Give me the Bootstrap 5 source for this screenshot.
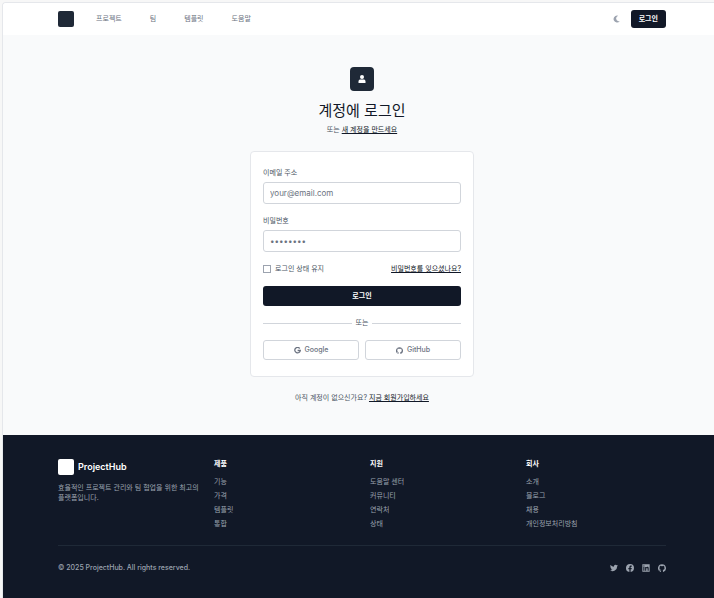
<!DOCTYPE html>
<html lang="ko">
<head>
<meta charset="utf-8">
<meta name="viewport" content="width=device-width, initial-scale=1">
<title>ProjectHub</title>
<link href="https://cdn.jsdelivr.net/npm/bootstrap@5.3.0/dist/css/bootstrap.min.css" rel="stylesheet">
<style>
body{background:#f7f7f7;font-family:Inter,"Noto Sans CJK KR",sans-serif;font-size:7px;line-height:10px;color:#4b5563}
svg{display:block;fill:currentColor}
a{color:inherit}
.page-frame{margin:2px 0 0 2px;border:solid #e5e7eb;border-width:1px 0 0 1px;border-radius:4px 0 0 0;background:#f9fafb;min-height:calc(100vh - 2px);overflow:hidden}
.page-inner{padding-left:55px;padding-right:48px}
.top-bar{height:32px;color:#6b7280}
.logo-box{width:16px;height:16px;border-radius:2px;background:#1f2937}
.menu-links{gap:28px;margin-left:22px}
.moon-btn{color:#9ca3af;margin-right:11px}
.moon-btn:hover{color:#6b7280}
.btn-ink{background:#111827;color:#fff;font-size:7px;line-height:10px;font-weight:700;border:0;border-radius:3px;padding:4px 8px}
.btn-ink:hover{background:#1f2937;color:#fff}
.btn-wide{padding:5px 8px;margin-top:12px}
.login-area{padding-top:32px;padding-bottom:32px}
.login-column{width:224px}
.user-badge{width:24px;height:24px;border-radius:4px;background:#1f2937}
.login-title{font-size:15px;line-height:20px;font-weight:400;color:#111827;margin:10px 0 4px}
.ink-link{color:#111827;text-decoration:underline}
.panel{border:1px solid #e5e7eb;border-radius:4px;background:#fff;padding:16px 12px;margin-top:16px}
.field-label{margin-bottom:4px;display:block}
.field-input{font-size:8px;line-height:12px;padding:4px 6px;border:1px solid #d1d5db;border-radius:3px;color:#374151}
.field-input::placeholder{color:#6b7280}
.tick{appearance:none;width:8px;height:8px;border:1px solid #9ca3af;background:#fff;margin:0 4px 0 0}
.tick:checked{background:#111827}
.rule{height:1px;background:#d1d5db}
.social-row{gap:6px}
.btn-line{border:1px solid #d1d5db;border-radius:3px;background:#fff;color:#6b7280;font-size:7px;line-height:10px;font-weight:500;padding:4px}
.site-footer{background:#111827;color:#9ca3af;padding-top:24px;padding-bottom:24px}
.brand-name{font-size:9px;line-height:16px;font-weight:600;color:#fff}
.brand-text{margin-right:-4px}
.footer-grid{display:grid;grid-template-columns:repeat(4,1fr);column-gap:16px}
.footer-title{font-size:7px;line-height:10px;font-weight:700;color:#fff;margin-bottom:8px}
.footer-links{gap:4px}
.footer-end{border-top:1px solid #1f2937;margin-top:16px;padding-top:17px}
</style>
<script src="https://cdn.jsdelivr.net/npm/bootstrap@5.3.0/dist/js/bootstrap.bundle.min.js"></script>
</head>
<body>
<svg class="d-none" aria-hidden="true">
<symbol id="github" viewBox="0 0 24 24"><path d="M12 .5a12 12 0 0 0-3.800 23.400c.6.1.8-.3.8-.6v-2.200c-3.300.7-4-1.400-4-1.400-.6-1.400-1.300-1.800-1.300-1.800-1.100-.7.1-.7.1-.7 1.200.1 1.800 1.200 1.800 1.200 1.100 1.800 2.800 1.300 3.500 1 .1-.8.4-1.300.8-1.600-2.700-.3-5.500-1.300-5.500-5.900 0-1.300.5-2.400 1.200-3.200-.1-.3-.5-1.500.1-3.200 0 0 1-.3 3.300 1.200a11.500 11.500 0 0 1 6 0c2.300-1.500 3.300-1.200 3.300-1.200.7 1.700.2 2.900.1 3.200.8.8 1.200 1.900 1.200 3.200 0 4.600-2.800 5.600-5.500 5.900.4.400.8 1.100.8 2.200v3.300c0 .3.2.7.8.6A12 12 0 0 0 12 .5z"/></symbol>
</svg>
<div class="page-frame d-flex flex-column">
<header class="bg-white">
<nav class="page-inner top-bar d-flex align-items-center" aria-label="주 메뉴">
<a href="#" class="logo-box" aria-label="ProjectHub"></a>
<div class="menu-links d-flex flex-grow-1">
<a href="#" class="text-decoration-none">프로젝트</a><a href="#" class="text-decoration-none">팀</a><a href="#" class="text-decoration-none">템플릿</a><a href="#" class="text-decoration-none">도움말</a>
</div>
<button type="button" class="moon-btn btn p-0 border-0" aria-label="다크 모드"><svg width="7" height="8" viewBox="0 0 14 16"><path d="M8 1a7 7 0 1 0 5.500 11.500c-1 .3-2 .2-3 0A5.600 5.600 0 0 1 9.500 2c.3-.2.500-.4.500-.700A7 7 0 0 0 8 1z"/></svg></button>
<button type="button" class="btn btn-ink">로그인</button>
</nav>
</header>
<main class="page-inner login-area">
<div class="login-column mx-auto text-center">
<div class="user-badge mx-auto d-flex align-items-center justify-content-center text-white"><svg width="8" height="8" viewBox="0 0 16 16"><circle cx="8" cy="4" r="4"/><path d="M1 16v-3c0-3 2-4 4-4h6c2 0 4 1 4 4v3z"/></svg></div>
<h1 class="login-title">계정에 로그인</h1>
<p class="m-0">또는 <a href="#" class="ink-link">새 계정을 만드세요</a></p>
<form class="panel text-start">
<label for="email" class="field-label">이메일 주소</label>
<input type="email" id="email" class="form-control field-input" placeholder="your@email.com">
<label for="password" class="field-label mt-2 pt-1">비밀번호</label>
<input type="password" id="password" class="form-control field-input" placeholder="••••••••">
<div class="d-flex justify-content-between align-items-center mt-2 pt-1">
<label for="remember" class="d-flex align-items-center"><input type="checkbox" id="remember" class="tick">로그인 상태 유지</label>
<a href="#" class="ink-link">비밀번호를 잊으셨나요?</a>
</div>
<button type="submit" class="btn btn-ink btn-wide w-100 d-block">로그인</button>
<div class="d-flex align-items-center gap-1 my-2 py-1"><span class="rule flex-fill"></span><span>또는</span><span class="rule flex-fill"></span></div>
<div class="social-row d-flex">
<button type="button" class="btn btn-line col d-flex align-items-center justify-content-center gap-1"><svg width="7" height="7" viewBox="0 0 14 14"><path fill="none" stroke="currentColor" stroke-width="2.600" d="M11.500 3A5.500 5.500 0 1 0 12.600 7H7.200"/></svg>Google</button>
<button type="button" class="btn btn-line col d-flex align-items-center justify-content-center gap-1"><svg width="7" height="7"><use href="#github"/></svg>GitHub</button>
</div>
</form>
<p class="mb-0 mt-3">아직 계정이 없으신가요? <a href="#" class="ink-link">지금 회원가입하세요</a></p>
</div>
</main>
<footer class="page-inner site-footer flex-grow-1">
<div class="footer-grid">
<div>
<div class="d-flex align-items-center gap-1 mb-2"><span class="logo-box bg-white"></span><span class="brand-name">ProjectHub</span></div>
<p class="brand-text mb-0">효율적인 프로젝트 관리와 팀 협업을 위한 최고의 플랫폼입니다.</p>
</div>
<div><h2 class="footer-title">제품</h2><div class="footer-links d-flex flex-column align-items-start"><a href="#" class="text-decoration-none">기능</a><a href="#" class="text-decoration-none">가격</a><a href="#" class="text-decoration-none">템플릿</a><a href="#" class="text-decoration-none">통합</a></div></div>
<div><h2 class="footer-title">지원</h2><div class="footer-links d-flex flex-column align-items-start"><a href="#" class="text-decoration-none">도움말 센터</a><a href="#" class="text-decoration-none">커뮤니티</a><a href="#" class="text-decoration-none">연락처</a><a href="#" class="text-decoration-none">상태</a></div></div>
<div><h2 class="footer-title">회사</h2><div class="footer-links d-flex flex-column align-items-start"><a href="#" class="text-decoration-none">소개</a><a href="#" class="text-decoration-none">블로그</a><a href="#" class="text-decoration-none">채용</a><a href="#" class="text-decoration-none">개인정보처리방침</a></div></div>
</div>
<div class="footer-end d-flex justify-content-between align-items-center">
<span class="fw-medium">© 2025 ProjectHub. All rights reserved.</span>
<div class="d-flex gap-2">
<a href="#" aria-label="Twitter"><svg width="8" height="8" viewBox="0 0 24 24"><path d="M24 4.600a10 10 0 0 1-2.800.8 5 5 0 0 0 2.200-2.700 10 10 0 0 1-3.100 1.200 4.900 4.900 0 0 0-8.400 4.500A14 14 0 0 1 1.700 3.100a4.900 4.900 0 0 0 1.500 6.600 5 5 0 0 1-2.200-.6 4.900 4.900 0 0 0 3.900 4.900 5 5 0 0 1-2.200.1 4.900 4.900 0 0 0 4.600 3.400A10 10 0 0 1 0 19.500 14 14 0 0 0 21.500 7.100 10 10 0 0 0 24 4.600z"/></svg></a>
<a href="#" aria-label="Facebook"><svg width="8" height="8" viewBox="0 0 24 24"><path d="M24 12A12 12 0 1 0 10.100 23.900v-8.400H7.100V12h3V9.400c0-3 1.800-4.700 4.500-4.700 1.300 0 2.700.2 2.700.2v3h-1.500c-1.500 0-1.900.9-1.900 1.900V12h3.300l-.5 3.500h-2.800v8.400A12 12 0 0 0 24 12z"/></svg></a>
<a href="#" aria-label="LinkedIn"><svg width="8" height="8" viewBox="0 0 24 24"><path fill-rule="evenodd" d="M1 1h22v22H1zM4 9v11h3.300V9zm0-4.500v3h3.300v-3zM9.500 9v11h3.300v-6c0-3 4-3 4 0v6H20v-7c0-5-5-5.500-7.200-2.600V9z"/></svg></a>
<a href="#" aria-label="GitHub"><svg width="8" height="8"><use href="#github"/></svg></a>
</div>
</div>
</footer>
</div>
</body>
</html>
